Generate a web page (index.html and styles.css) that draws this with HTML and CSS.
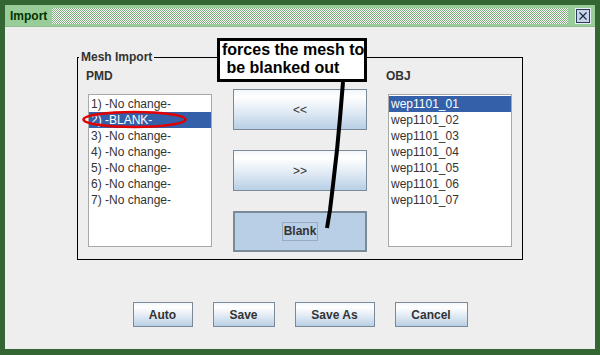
FILE: index.html
```html
<!DOCTYPE html>
<html lang="en">
<head>
  <meta charset="UTF-8">
  <title>Import</title>
  <link rel="stylesheet" href="styles.css">
</head>
<body>
  <div class="window">
    <div class="titlebar">
      <span class="title">Import</span>
      <span class="grip"></span>
      <span class="close">
        <svg width="16" height="16" viewBox="0 0 16 16">
          <rect x="0.5" y="0.5" width="15" height="15" fill="#f4f8fc" stroke="#e8eef6"/>
          <rect x="1.5" y="1.5" width="13" height="13" fill="#c6d5e8" stroke="#2b3a5c"/>
          <path d="M4.5 4.5l7 7M11.5 4.5l-7 7" stroke="#1c2a48" stroke-width="1.2"/>
        </svg>
      </span>
    </div>

    <div class="content">
      <fieldset class="group">
        <legend>Mesh Import</legend>
        <div class="cols">
          <div class="col">
            <div class="col-label">PMD</div>
            <ul class="list">
              <li>1) -No change-</li>
              <li class="selected">2) -BLANK-</li>
              <li>3) -No change-</li>
              <li>4) -No change-</li>
              <li>5) -No change-</li>
              <li>6) -No change-</li>
              <li>7) -No change-</li>
            </ul>
          </div>
          <div class="mid">
            <button class="btn btn-big">&lt;&lt;</button>
            <button class="btn btn-big">&gt;&gt;</button>
            <button class="btn btn-big pressed"><span class="focus">Blank</span></button>
          </div>
          <div class="col">
            <div class="col-label">OBJ</div>
            <ul class="list">
              <li class="selected">wep1101_01</li>
              <li>wep1101_02</li>
              <li>wep1101_03</li>
              <li>wep1101_04</li>
              <li>wep1101_05</li>
              <li>wep1101_06</li>
              <li>wep1101_07</li>
            </ul>
          </div>
        </div>
      </fieldset>

      <div class="actions">
        <button class="btn btn-small auto">Auto</button>
        <button class="btn btn-small save">Save</button>
        <button class="btn btn-small save-as">Save As</button>
        <button class="btn btn-small cancel">Cancel</button>
      </div>
    </div>

    <!-- annotations drawn over the dialog -->
    <svg class="marks" width="600" height="355" viewBox="0 0 600 355">
      <ellipse cx="134.5" cy="119.5" rx="51" ry="7.5" fill="none" stroke="#e00000" stroke-width="2.5"/>
      <polyline points="343,82 340,118 337,150 333,185 330,210 327,228" fill="none" stroke="#000" stroke-width="4"/>
    </svg>
    <div class="callout">forces the mesh to
 be blanked out</div>
  </div>
</body>
</html>
```

FILE: styles.css
```css
html, body {
  margin: 0;
  padding: 0;
}

body {
  font-family: "Liberation Sans", Arial, sans-serif;
  font-size: 12px;
  color: #333;
  background: #eeeeee;
}

.window {
  position: relative;
  width: 600px;
  height: 355px;
  box-sizing: border-box;
  border: 5px solid #336633;
  border-bottom-width: 6px;
  background: #eeeeee;
  display: flex;
  flex-direction: column;
}

.titlebar {
  height: 22px;
  display: flex;
  align-items: center;
  padding: 0 4px 0 5px;
  background: #99cc99;
  box-sizing: border-box;
  border-bottom: 1px solid #8cbf8c;
}

.title {
  font-weight: bold;
  color: #003300;
  line-height: 14px;
}

.grip {
  flex: 1;
  height: 16px;
  margin: 0 7px 0 5px;
  background: repeating-conic-gradient(#ffffff 0 25%, #7aac7a 0 50%) 0 0 / 2px 2px;
}

.close {
  width: 16px;
  height: 16px;
}

.close svg {
  display: block;
}

.content {
  flex: 1;
}

.group {
  margin: 23px 0 0 72px;
  width: 446px;
  box-sizing: border-box;
  border: 1px solid #000;
  padding: 5px 10px 7px 10px;
  min-width: 0;
}

.group legend {
  font-weight: bold;
  line-height: 14px;
  padding: 0 2px;
  margin-left: -9px;
  color: #333;
}

.cols {
  display: flex;
  gap: 21px;
}

.col {
  width: 124px;
}

.col-label {
  font-weight: bold;
  line-height: 14px;
  margin: 0 0 11px -2px;
}

.list {
  list-style: none;
  margin: 0;
  padding: 1px 0 0;
  height: 153px;
  box-sizing: border-box;
  border: 1px solid #a8a8a8;
  background: #fff;
}

.list li {
  height: 16px;
  line-height: 16px;
  padding-left: 2px;
  color: #333;
}

.list li.selected {
  background: #3360a8;
  color: #fff;
}

.mid {
  width: 134px;
  padding-top: 20px;
  display: flex;
  flex-direction: column;
  gap: 20px;
}

.btn {
  font-family: "Liberation Sans", Arial, sans-serif;
  font-size: 12px;
  color: #333;
  border: 1px solid #7a8a99;
  background: linear-gradient(#f2f6fa, #ffffff 18%, #dde8f3 60%, #b8cfe5);
  padding: 0;
  margin: 0;
  box-sizing: border-box;
}

.btn-big {
  height: 41px;
  width: 134px;
}

.btn.pressed {
  background: #b8cfe5;
  border: 2px solid #7a8a99;
  font-weight: bold;
}

.focus {
  display: inline-block;
  padding: 1px 1px;
  line-height: 15px;
  border: 1px solid #98abc0;
}

.actions {
  display: flex;
  justify-content: center;
  gap: 20px;
  margin-top: 42px;
}

.btn-small {
  height: 25px;
  font-weight: bold;
}

.auto { width: 60px; }
.save { width: 62px; }
.save-as { width: 80px; }
.cancel { width: 73px; }

.marks {
  position: absolute;
  left: -5px;
  top: -5px;
  pointer-events: none;
}

.callout {
  position: absolute;
  left: 212px;
  top: 33px;
  width: 150px;
  height: 44px;
  box-sizing: border-box;
  border: 3px solid #000;
  background: #fff;
  padding-left: 2px;
  font-weight: bold;
  font-size: 16px;
  line-height: 18px;
  color: #000;
  white-space: pre;
  overflow: hidden;
}
```
